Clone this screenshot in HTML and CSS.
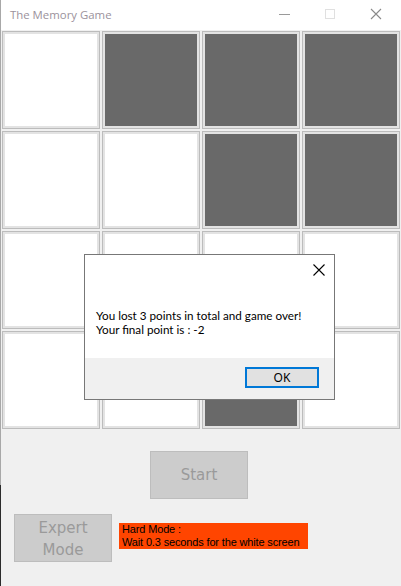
FILE: index.html
```html
<!DOCTYPE html>
<html>
<head>
<meta charset="utf-8">
<link rel="stylesheet" href="styles.css">
</head>
<body>
<div class="window">
  <div class="frame-left"></div>
  <div class="main">
    <div class="titlebar">
      <span class="title">The Memory Game</span>
      <div class="caption">
        <svg class="cap-btn" width="46" height="30" viewBox="0 0 46 30"><line x1="17" y1="14.5" x2="28" y2="14.5" stroke="#9a9a9a" stroke-width="1"/></svg>
        <svg class="cap-btn" width="46" height="30" viewBox="0 0 46 30"><rect x="17.5" y="9.5" width="9" height="9" fill="none" stroke="#e0e0e0" stroke-width="1"/></svg>
        <svg class="cap-btn" width="46" height="30" viewBox="0 0 46 30"><path d="M17 9 L27 19 M27 9 L17 19" stroke="#8a8a8a" stroke-width="1.1" fill="none"/></svg>
      </div>
    </div>
    <div class="grid">
      <div class="tile"></div>
      <div class="tile dark"></div>
      <div class="tile dark"></div>
      <div class="tile dark"></div>
      <div class="tile"></div>
      <div class="tile"></div>
      <div class="tile dark"></div>
      <div class="tile dark"></div>
      <div class="tile"></div>
      <div class="tile"></div>
      <div class="tile"></div>
      <div class="tile"></div>
      <div class="tile"></div>
      <div class="tile"></div>
      <div class="tile dark"></div>
      <div class="tile"></div>
    </div>
    <div class="start-row">
      <button class="btn start">Start</button>
    </div>
    <div class="bottom-row">
      <button class="btn expert">Expert<br>Mode</button>
      <div class="hard-label">Hard Mode :<br>Wait 0.3 seconds for the white screen</div>
    </div>
  </div>
</div>
<div class="dialog">
  <div class="dialog-body">
    <div class="dialog-top">
      <svg class="dialog-close" width="14" height="14" viewBox="0 0 14 14"><path d="M1.5 1.5 L12.5 12.5 M12.5 1.5 L1.5 12.5" stroke="#000" stroke-width="1.1" fill="none"/></svg>
    </div>
    <p class="dialog-msg">You lost 3 points in total and game over!<br>Your final point is : -2</p>
  </div>
  <div class="dialog-footer">
    <button class="ok-btn">OK</button>
  </div>
</div>
</body>
</html>
```
FILE: styles.css
```css
* { box-sizing: border-box; }
html, body {
  margin: 0;
  padding: 0;
}
body {
  width: 401px;
  height: 586px;
  background: #f0f0f0;
  position: relative;
  overflow: hidden;
  font-family: "Noto Sans", "Open Sans", sans-serif;
}
.window {
  display: flex;
  height: 586px;
}
.frame-left {
  width: 1px;
  flex: none;
  background: linear-gradient(#a8a8a8 0, #a8a8a8 485px, #2b2b2b 485px, #2b2b2b 100%);
}
.main {
  flex: 1;
  display: flex;
  flex-direction: column;
  background: #f0f0f0;
}
.titlebar {
  height: 30px;
  background: #ffffff;
  display: flex;
  align-items: center;
  justify-content: space-between;
}
.title {
  padding-left: 9px;
  font-family: "Open Sans", "Noto Sans", sans-serif;
  font-size: 11.4px;
  color: #9b929c;
  position: relative;
  top: -1px;
}
.caption {
  display: flex;
  align-self: stretch;
  padding-right: 1px;
}
.cap-btn { display: block; }
.grid {
  display: grid;
  grid-template-columns: repeat(4, 98px);
  grid-auto-rows: 98px;
  gap: 2px;
  padding: 1px 0 0 1px;
}
.tile {
  border: 1px solid #bcbcbc;
  background: #ffffff;
  box-shadow: inset 0 0 0 2px #e3e3e3;
}
.tile.dark {
  background: #696969;
}
.start-row {
  padding: 22px 0 0 149px;
}
.btn {
  display: block;
  margin: 0;
  padding: 0;
  width: 98px;
  height: 48px;
  background: #cccccc;
  border: 1px solid #bdbdbd;
  color: #9a9a9a;
  font-family: "DejaVu Sans", sans-serif;
  font-size: 15px;
  line-height: 22px;
}
.btn.expert {
  padding-top: 1px;
}
.bottom-row {
  display: flex;
  align-items: flex-start;
  padding: 15px 0 0 13px;
}
.hard-label {
  margin: 9px 0 0 7px;
  width: 189px;
  height: 26px;
  background: #ff4500;
  color: #000;
  font-family: "Liberation Sans", Arial, sans-serif;
  font-size: 11px;
  letter-spacing: -0.15px;
  line-height: 13px;
  padding: 0 0 0 3px;
  white-space: nowrap;
}
.dialog {
  position: absolute;
  left: 84px;
  top: 254px;
  width: 251px;
  height: 146px;
  border: 1px solid #777777;
  background: #f0f0f0;
  display: flex;
  flex-direction: column;
}
.dialog-body {
  background: #ffffff;
  height: 103px;
  position: relative;
}
.dialog-top {
  display: flex;
  justify-content: flex-end;
  padding: 8px 8px 0 0;
  height: 40px;
}
.dialog-close { display: block; }
.dialog-msg {
  margin: 0;
  padding: 13px 0 0 11px;
  font-family: "Lato", "Noto Sans", sans-serif;
  font-size: 11.7px;
  line-height: 14px;
  color: #000;
  white-space: nowrap;
}
.dialog-footer {
  flex: 1;
  display: flex;
  justify-content: flex-end;
  padding: 9px 15px 0 0;
}
.ok-btn {
  width: 74px;
  height: 21px;
  margin: 0;
  padding: 0;
  border: 2px solid #0078d7;
  background: #e1e1e1;
  font-family: "Noto Sans", "Open Sans", sans-serif;
  font-size: 12px;
  color: #000;
  line-height: 15px;
}
```
